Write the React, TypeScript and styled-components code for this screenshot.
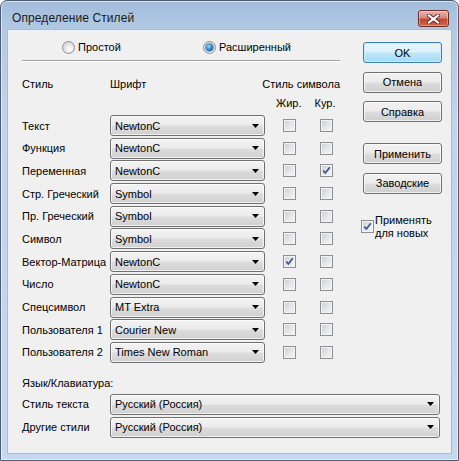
import React from 'react';
import styled, { createGlobalStyle } from 'styled-components';

// --- Global ---
const GlobalStyle = createGlobalStyle`
  html, body {
    margin: 0;
    padding: 0;
    background: #ffffff;
  }
  body {
    font-family: "Liberation Sans", Arial, sans-serif;
    font-size: 11px;
    color: #000;
  }
`;

// --- Window frame ---
const Window = styled.div`
  width: 459px;
  height: 461px;
  box-sizing: border-box;
  border: 1px solid #4a5d74;
  border-radius: 7px 7px 0 0;
  background: linear-gradient(#a2bcdb 0px, #b3cae4 30px, #c0d5ec 120px, #c4d8ef 100%);
  box-shadow: inset 0 0 0 1px rgba(255, 255, 255, 0.55);
  display: flex;
  flex-direction: column;
  padding: 0 7px 7px;
`;

const TitleBar = styled.div`
  height: 29px;
  display: flex;
  align-items: flex-start;
  justify-content: space-between;
  padding-left: 4px;
`;

const Title = styled.div`
  font-size: 12px;
  margin-top: 10px;
  color: #1a1a1a;
  letter-spacing: 0.1px;
`;

const CloseButton = styled.div`
  width: 31px;
  height: 17px;
  margin-top: 9px;
  margin-right: 2px;
  box-sizing: border-box;
  border: 1px solid #6b2f29;
  border-radius: 3px;
  background: linear-gradient(#eab1a5 0%, #d98a78 45%, #c4452e 55%, #d0634c 100%);
  box-shadow: inset 0 0 0 1px rgba(255, 255, 255, 0.35);
  display: flex;
  align-items: center;
  justify-content: center;
`;

const Client = styled.div`
  flex: 1;
  background: #f0f0f0;
  box-shadow: 0 0 0 1px #a4bcd8;
  display: flex;
  flex-direction: column;
`;

// --- Top area ---
const TopArea = styled.div`
  display: flex;
  padding-left: 14px;
  gap: 23px;
`;

const LeftPanel = styled.div`
  width: 318px;
  padding-top: 10px;
`;

const RadioRow = styled.div`
  display: grid;
  grid-template-columns: 141px auto;
  padding-left: 40px;
  height: 14px;
  align-items: center;
`;

const RadioItem = styled.label`
  display: flex;
  align-items: center;
  gap: 3px;
`;

const RadioCircle = styled.span<{ $checked?: boolean }>`
  width: 13px;
  height: 13px;
  box-sizing: border-box;
  border-radius: 50%;
  border: 1px solid #8e9093;
  background: radial-gradient(circle at 60% 65%, #ffffff 0%, #e6e6e6 45%, #c6c6c6 100%);
  display: flex;
  align-items: center;
  justify-content: center;

  &::after {
    content: '';
    display: ${p => (p.$checked ? 'block' : 'none')};
    width: 7px;
    height: 7px;
    border-radius: 50%;
    background: radial-gradient(circle at 40% 35%, #9fe0ff 0%, #2f8fd8 45%, #0b3f86 100%);
    box-shadow: 0 0 0 0.5px #23466f;
  }
`;

const Separator = styled.div`
  margin-top: 6px;
  height: 1px;
  background: #a0a0a0;
  border-bottom: 1px solid #ffffff;
`;

const HeaderRow = styled.div`
  margin-top: 15px;
  display: flex;
  height: 13px;
  align-items: center;
`;

const HeaderCell = styled.span<{ $width?: number }>`
  width: ${p => (p.$width ? `${p.$width}px` : 'auto')};
  &:last-child {
    margin-left: auto;
  }
`;

const SubHeaderRow = styled.div`
  margin-top: 6px;
  display: flex;
  gap: 13px;
  padding-left: 254px;
  height: 13px;
  align-items: center;
`;

const StyleGrid = styled.div`
  margin-top: 6px;
  display: grid;
  grid-template-columns: 88px 155px 31px 37px;
  grid-auto-rows: 21px;
  row-gap: 1.7px;
  align-items: center;
`;

const RowLabel = styled.span`
  white-space: nowrap;
`;

// --- Combo box ---
const Combo = styled.div`
  height: 21px;
  box-sizing: border-box;
  border: 1px solid #707070;
  border-radius: 3px;
  background: linear-gradient(#f3f3f3 0%, #ebebeb 48%, #dddddd 52%, #d0d0d0 100%);
  box-shadow: inset 0 0 0 1px rgba(255, 255, 255, 0.7);
  display: flex;
  align-items: center;
  justify-content: space-between;
  padding: 0 5px 0 4px;
`;

const ArrowIcon = () => (
  <svg width="7" height="4" viewBox="0 0 7 4">
    <path d="M0 0H7L3.5 4Z" fill="#000" />
  </svg>
);

// --- Checkbox ---
const CheckCell = styled.div`
  justify-self: end;
  display: flex;
`;

const Box = styled.span`
  width: 13px;
  height: 13px;
  box-sizing: border-box;
  border: 1px solid #8f8f8f;
  background: linear-gradient(135deg, #c9ccd1 0%, #e4e5e7 50%, #f7f7f7 100%);
  box-shadow: inset 0 0 0 1px #f4f4f4;
  display: flex;
  align-items: center;
  justify-content: center;
  flex-shrink: 0;
`;

const CheckBox = ({ checked }: { checked?: boolean }) => (
  <Box>
    {checked && (
      <svg width="11" height="11" viewBox="0 0 11 11">
        <path d="M2.2 5.6L4.4 8L8.8 2.2" fill="none" stroke="#3b5599" strokeWidth="1.7" />
      </svg>
    )}
  </Box>
);

// --- Right panel ---
const RightPanel = styled.div`
  width: 79px;
  padding-top: 12px;
  display: flex;
  flex-direction: column;
`;

const ButtonGroup = styled.div<{ $top?: number }>`
  display: flex;
  flex-direction: column;
  gap: 8.5px;
  margin-top: ${p => p.$top ?? 0}px;
`;

const Button = styled.div<{ $default?: boolean }>`
  height: 21px;
  box-sizing: border-box;
  border: 1px solid ${p => (p.$default ? '#3c7fb1' : '#707070')};
  border-radius: 3px;
  background: ${p =>
    p.$default
      ? 'linear-gradient(#eaf6fd 0%, #d9f0fc 48%, #bee6fd 52%, #a7d9f5 100%)'
      : 'linear-gradient(#f2f2f2 0%, #ebebeb 48%, #dddddd 52%, #cfcfcf 100%)'};
  box-shadow: inset 0 0 0 1px ${p => (p.$default ? 'rgba(200, 240, 255, 0.9)' : 'rgba(255, 255, 255, 0.7)')};
  display: flex;
  align-items: center;
  justify-content: center;
`;

const ApplyNew = styled.label`
  margin-top: 20px;
  margin-left: -2px;
  display: flex;
  align-items: center;
  gap: 1px;
  line-height: 13px;
`;

// --- Bottom area ---
const BottomArea = styled.div`
  padding: 0 0 0 14px;
`;

const SectionLabel = styled.div`
  margin-top: 14px;
  height: 13px;
`;

const LangGrid = styled.div`
  margin-top: 4px;
  display: grid;
  grid-template-columns: 88px 330px;
  grid-auto-rows: 21px;
  row-gap: 2px;
  align-items: center;
`;

// --- Data ---
const styleRows: { label: string; font: string; bold?: boolean; italic?: boolean }[] = [
  { label: 'Текст', font: 'NewtonC' },
  { label: 'Функция', font: 'NewtonC' },
  { label: 'Переменная', font: 'NewtonC', italic: true },
  { label: 'Стр. Греческий', font: 'Symbol' },
  { label: 'Пр. Греческий', font: 'Symbol' },
  { label: 'Символ', font: 'Symbol' },
  { label: 'Вектор-Матрица', font: 'NewtonC', bold: true },
  { label: 'Число', font: 'NewtonC' },
  { label: 'Спецсимвол', font: 'MT Extra' },
  { label: 'Пользователя 1', font: 'Courier New' },
  { label: 'Пользователя 2', font: 'Times New Roman' },
];

const langRows = [
  { label: 'Стиль текста', value: 'Русский (Россия)' },
  { label: 'Другие стили', value: 'Русский (Россия)' },
];

export default function App() {
  return (
    <>
      <GlobalStyle />
      <Window>
        <TitleBar>
          <Title>Определение Стилей</Title>
          <CloseButton>
            <svg width="13" height="10" viewBox="0 0 13 10">
              <path d="M2 1.5L11 8.5M11 1.5L2 8.5" stroke="#5a2a26" strokeWidth="4" strokeLinecap="square" />
              <path d="M2 1.5L11 8.5M11 1.5L2 8.5" stroke="#ffffff" strokeWidth="2.2" strokeLinecap="square" />
            </svg>
          </CloseButton>
        </TitleBar>
        <Client>
          <TopArea>
            <LeftPanel>
              <RadioRow>
                <RadioItem>
                  <RadioCircle />
                  Простой
                </RadioItem>
                <RadioItem>
                  <RadioCircle $checked />
                  Расширенный
                </RadioItem>
              </RadioRow>
              <Separator />
              <HeaderRow>
                <HeaderCell $width={88}>Стиль</HeaderCell>
                <HeaderCell>Шрифт</HeaderCell>
                <HeaderCell>Стиль символа</HeaderCell>
              </HeaderRow>
              <SubHeaderRow>
                <span>Жир.</span>
                <span>Кур.</span>
              </SubHeaderRow>
              <StyleGrid>
                {styleRows.map(row => (
                  <React.Fragment key={row.label}>
                    <RowLabel>{row.label}</RowLabel>
                    <Combo>
                      <span>{row.font}</span>
                      <ArrowIcon />
                    </Combo>
                    <CheckCell>
                      <CheckBox checked={row.bold} />
                    </CheckCell>
                    <CheckCell>
                      <CheckBox checked={row.italic} />
                    </CheckCell>
                  </React.Fragment>
                ))}
              </StyleGrid>
            </LeftPanel>
            <RightPanel>
              <ButtonGroup>
                <Button $default>OK</Button>
                <Button>Отмена</Button>
                <Button>Справка</Button>
              </ButtonGroup>
              <ButtonGroup $top={21}>
                <Button>Применить</Button>
                <Button>Заводские</Button>
              </ButtonGroup>
              <ApplyNew>
                <CheckBox checked />
                <span>
                  Применять
                  <br />
                  для новых
                </span>
              </ApplyNew>
            </RightPanel>
          </TopArea>
          <BottomArea>
            <SectionLabel>Язык/Клавиатура:</SectionLabel>
            <LangGrid>
              {langRows.map(row => (
                <React.Fragment key={row.label}>
                  <RowLabel>{row.label}</RowLabel>
                  <Combo>
                    <span>{row.value}</span>
                    <ArrowIcon />
                  </Combo>
                </React.Fragment>
              ))}
            </LangGrid>
          </BottomArea>
        </Client>
      </Window>
    </>
  );
}
